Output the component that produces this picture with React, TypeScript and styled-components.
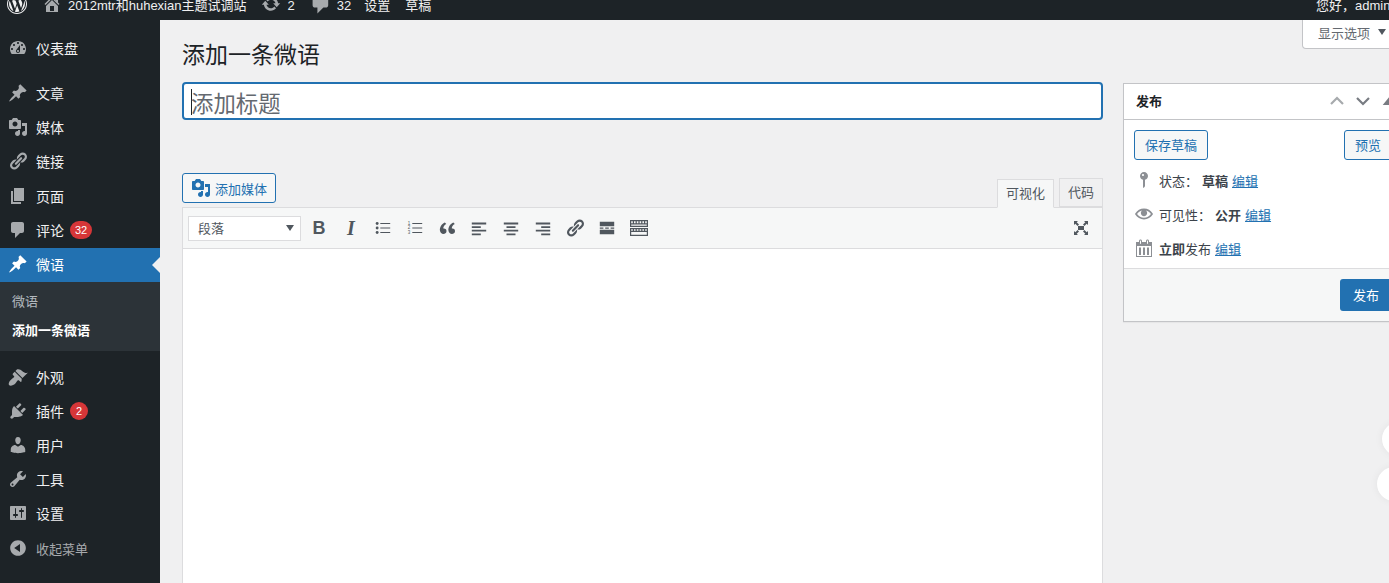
import React from "react";
import styled, { createGlobalStyle } from "styled-components";

const Global = createGlobalStyle`
  html, body { margin: 0; padding: 0; height: 100%; overflow: hidden; background: #f0f0f1; }
  * { box-sizing: border-box; }
  body { font-family: "Liberation Sans", "Noto Sans CJK SC", sans-serif; font-size: 13px; color: #3c434a; }
`;

const P: Record<string, string> = {
  wp: "M20 10c0-5.52-4.48-10-10-10S0 4.48 0 10s4.48 10 10 10 10-4.48 10-10zM10 1.01c4.96 0 8.99 4.03 8.99 8.99s-4.03 8.99-8.99 8.99S1.01 14.96 1.01 10 5.04 1.01 10 1.01zM8.01 14.82L4.96 6.61c.49-.03 1.05-.08 1.05-.08.43-.05.38-1.01-.06-.99 0 0-1.29.1-2.13.1-.15 0-.33 0-.52-.01 1.44-2.17 3.9-3.6 6.7-3.6 2.09 0 3.99.79 5.41 2.09-.6-.08-1.45.35-1.45 1.42 0 .66.38 1.22.79 1.88.31.54.5 1.22.5 2.21 0 1.34-1.27 4.48-1.27 4.48l-2.71-7.5c.48-.03.75-.16.75-.16.43-.05.38-1.1-.05-1.08 0 0-1.3.11-2.14.11-.78 0-2.11-.11-2.11-.11-.43-.02-.48 1.06-.05 1.08l.84.08 1.12 3.04zm6.02 2.15L16.64 10s.67-1.69.39-3.81c.63 1.14.94 2.42.94 3.81 0 2.96-1.56 5.58-3.94 6.97zM2.68 6.77L6.5 17.25c-2.67-1.3-4.47-4.08-4.47-7.25 0-1.16.2-2.23.65-3.23zm7.45 4.53l2.29 6.25c-.76.3-1.57.45-2.42.45-.72 0-1.41-.11-2.06-.31z",
  home: "M16 8.5l1.53 1.53-1.06 1.06L10 4.62l-6.47 6.47-1.06-1.06L10 2.5l4 4v-2h2v4zm-6-2.46l6 5.99V18H4v-5.97zM12 17v-5H8v5h4z",
  update: "M10.2 3.28c3.53 0 6.43 2.61 6.92 6h2.08l-3.5 4-3.5-4h2.32c-.45-1.97-2.21-3.45-4.32-3.45-1.45 0-2.73.71-3.54 1.78L4.95 5.66C6.23 4.2 8.11 3.28 10.2 3.28zm-.4 13.44c-3.52 0-6.43-2.61-6.92-6H.8l3.5-4c1.17 1.33 2.33 2.67 3.5 4H5.48c.45 1.97 2.21 3.45 4.32 3.45 1.45 0 2.73-.71 3.54-1.78l1.71 1.95c-1.28 1.46-3.15 2.38-5.25 2.38z",
  comment: "M5 2h9c1.1 0 2 .9 2 2v7c0 1.1-.9 2-2 2h-2l-5 5v-5H5c-1.1 0-2-.9-2-2V4c0-1.1.9-2 2-2z",
  dashboard: "M3.76 16h12.48c1.1-1.37 1.76-3.11 1.76-5 0-4.42-3.58-8-8-8s-8 3.58-8 8c0 1.89.66 3.63 1.76 5zM10 4c.55 0 1 .45 1 1s-.45 1-1 1-1-.45-1-1 .45-1 1-1zM6 6c.55 0 1 .45 1 1s-.45 1-1 1-1-.45-1-1 .45-1 1-1zm8 0c.55 0 1 .45 1 1s-.45 1-1 1-1-.45-1-1 .45-1 1-1zm-5.37 5.55L12 7v6c0 1.1-.9 2-2 2s-2-.9-2-2c0-.57.24-1.08.63-1.45zM4 10c.55 0 1 .45 1 1s-.45 1-1 1-1-.45-1-1 .45-1 1-1zm12 0c.55 0 1 .45 1 1s-.45 1-1 1-1-.45-1-1 .45-1 1-1zm-5 3c0-.55-.45-1-1-1s-1 .45-1 1 .45 1 1 1 1-.45 1-1z",
  post: "M10.44 3.02l1.82-1.82 6.36 6.35-1.83 1.82c-1.05-.68-2.48-.57-3.41.36l-.75.75c-.92.93-1.04 2.35-.35 3.41l-1.83 1.82-2.41-2.41-2.8 2.79c-.42.42-3.38 2.71-3.8 2.29s1.86-3.39 2.28-3.81l2.79-2.79L4.1 9.36l1.83-1.82c1.05.69 2.48.57 3.4-.36l.75-.75c.93-.92 1.05-2.35.36-3.41z",
  media: "M13 11V4c0-.55-.45-1-1-1h-1.67L9 1H5L3.67 3H2c-.55 0-1 .45-1 1v7c0 .55.45 1 1 1h10c.55 0 1-.45 1-1zM7 4.5c1.38 0 2.5 1.12 2.5 2.5S8.38 9.5 7 9.5 4.5 8.38 4.5 7 5.62 4.5 7 4.5zM14 6h5v10.5c0 1.38-1.12 2.5-2.5 2.5S14 17.88 14 16.5s1.12-2.5 2.5-2.5c.17 0 .34.02.5.05V9h-3V6zm-4 8.05V13h2v3.5c0 1.38-1.12 2.5-2.5 2.5S7 17.88 7 16.5 8.12 14 9.5 14c.17 0 .34.02.5.05z",
  links: "M17.74 2.76c1.68 1.69 1.68 4.41 0 6.1l-1.53 1.52c-1.12 1.12-2.7 1.47-4.14 1.09l2.62-2.61.76-.77.76-.76c.84-.84.84-2.2 0-3.04-.84-.85-2.2-.85-3.04 0l-.77.76-3.38 3.38c-.37-1.44-.02-3.02 1.1-4.14l1.52-1.53c1.69-1.68 4.42-1.68 6.1 0zM8.59 13.43l5.34-5.34c.42-.42.42-1.1 0-1.52-.44-.43-1.13-.39-1.53 0l-5.33 5.34c-.42.42-.42 1.1 0 1.52.44.43 1.13.39 1.52 0zm-.76 2.29l4.14-4.15c.38 1.44.03 3.02-1.09 4.14l-1.52 1.53c-1.69 1.68-4.41 1.68-6.1 0-1.68-1.68-1.68-4.42 0-6.1l1.53-1.52c1.12-1.12 2.7-1.47 4.14-1.1l-4.14 4.15c-.85.84-.85 2.2 0 3.05.84.84 2.2.84 3.04 0z",
  page: "M6 15V2h10v13H6zm-1 1h8v2H3V5h2v11z",
  appearance: "M14.48 11.06L7.41 3.99l1.5-1.5c.5-.56 2.3-.47 3.51.32 1.21.8 1.43 1.28 2.91 2.1 1.18.64 2.45 1.26 4.45.85zm-.71.71L6.7 4.7 4.93 6.47c-.39.39-.39 1.02 0 1.41l1.06 1.06c.39.39.39 1.03 0 1.42-.6.6-1.43 1.11-2.21 1.69-.35.26-.7.53-1.01.84C1.43 13.71 0 17 1.25 18.25c1.25 1.25 4.5-.15 5.84-1.48.31-.31.58-.66.84-1.01.58-.78 1.09-1.61 1.69-2.21.39-.39 1.03-.39 1.42 0l1.06 1.06c.39.39 1.02.39 1.41 0z",
  plugins: "M13.11 4.36L9.87 7.6 8 5.73l3.24-3.24c.35-.34 1.05-.2 1.56.32.52.51.66 1.21.31 1.55zm-8 1.77l.91-1.12 9.01 9.01-1.19.84c-.71.71-2.63 1.16-3.82 1.16H6.14L4.9 17.26c-.59.59-1.54.59-2.12 0-.59-.58-.59-1.53 0-2.12l1.24-1.24v-3.88c0-1.13.4-3.19 1.09-3.89zm7.26 3.97l3.24-3.24c.34-.35 1.04-.21 1.55.31.52.51.66 1.21.31 1.55l-3.24 3.25z",
  users: "M10 9.25c-2.27 0-2.73-3.44-2.73-3.44C7 4.02 7.82 2 9.97 2c2.16 0 2.98 2.02 2.71 3.81 0 0-.41 3.44-2.68 3.44zm0 2.57L12.72 10c2.39 0 4.52 2.33 4.52 4.53v2.49s-3.65 1.13-7.24 1.13c-3.65 0-7.24-1.13-7.24-1.13v-2.49c0-2.25 1.94-4.48 4.47-4.48z",
  tools: "M16.68 9.77c-1.34 1.34-3.3 1.67-4.95.99l-5.41 6.52c-.99.99-2.59.99-3.58 0s-.99-2.59 0-3.57l6.52-5.42c-.68-1.65-.35-3.61.99-4.95 1.28-1.28 3.12-1.62 4.72-1.06l-2.89 2.89 2.82 2.82 2.86-2.87c.53 1.58.18 3.39-1.08 4.65zM3.81 16.21c.4.39 1.04.39 1.43 0 .4-.4.4-1.04 0-1.43-.39-.4-1.03-.4-1.43 0-.39.39-.39 1.03 0 1.43z",
  settings: "M18 16V4c0-.55-.45-1-1-1H3c-.55 0-1 .45-1 1v12c0 .55.45 1 1 1h14c.55 0 1-.45 1-1zM8 11h1c.55 0 1 .45 1 1s-.45 1-1 1H8v1.5c0 .28-.22.5-.5.5s-.5-.22-.5-.5V13H6c-.55 0-1-.45-1-1s.45-1 1-1h1V5.5c0-.28.22-.5.5-.5s.5.22.5.5V11zm5-2h-1c-.55 0-1-.45-1-1s.45-1 1-1h1V5.5c0-.28.22-.5.5-.5s.5.22.5.5V7h1c.55 0 1 .45 1 1s-.45 1-1 1h-1v5.5c0 .28-.22.5-.5.5s-.5-.22-.5-.5V9z",
  collapse: "M10 2.16c4.33 0 7.84 3.51 7.84 7.84s-3.51 7.84-7.84 7.84S2.16 14.33 2.16 10 5.71 2.16 10 2.16zm2 11.72V6.12L6.18 9.97z",
  pin: "M14 6c0 1.86-1.28 3.41-3 3.86V16c0 1-2 2-2 2V9.86c-1.72-.45-3-2-3-3.86 0-2.21 1.79-4 4-4s4 1.79 4 4zM8 5c0 .55.45 1 1 1s1-.45 1-1-.45-1-1-1-1 .45-1 1z",
  eye: "M19.7 9.4C17.7 6 14 3.9 10 3.9S2.3 6 .3 9.4L0 10l.3.6c2 3.4 5.7 5.5 9.7 5.5s7.7-2.1 9.7-5.5l.3-.6-.3-.6zM10 14.1c-3.1 0-6-1.6-7.7-4.1C3.6 8 5.7 6.6 8 6.1c-.9.6-1.5 1.7-1.5 2.9 0 1.9 1.6 3.5 3.5 3.5s3.5-1.6 3.5-3.5c0-1.2-.6-2.3-1.5-2.9 2.3.5 4.4 1.9 5.7 3.9-1.7 2.5-4.6 4.1-7.7 4.1z",
  calendar: "M15 4h3v15H2V4h3V3c0-.41.15-.76.44-1.06.29-.29.65-.44 1.06-.44s.77.15 1.06.44c.29.3.44.65.44 1.06v1h4V3c0-.41.15-.76.44-1.06.29-.29.65-.44 1.06-.44s.77.15 1.06.44c.29.3.44.65.44 1.06v1zM6 3v2.5c0 .14.05.26.15.36.09.09.21.14.35.14s.26-.05.35-.14c.1-.1.15-.22.15-.36V3c0-.14-.05-.26-.15-.35-.09-.1-.21-.15-.35-.15s-.26.05-.35.15c-.1.09-.15.21-.15.35zm7 0v2.5c0 .14.05.26.14.36.1.09.22.14.36.14s.26-.05.36-.14c.09-.1.14-.22.14-.36V3c0-.14-.05-.26-.14-.35-.1-.1-.22-.15-.36-.15s-.26.05-.36.15c-.09.09-.14.21-.14.35zm4 15V8H3v10h14zM5 9.5h2V17H5zM9 9.5h2V17H9zM13 9.5h2V17h-2z",
  quote: "M9.49 13.22c0-.74-.2-1.38-.61-1.9-.62-.78-1.83-.88-2.53-.72-.29-1.65 1.11-3.75 2.92-4.65L7.88 4.5c-2.73 1.3-5.42 4.28-4.96 8.05C3.21 14.92 4.8 16 6.3 16c.75 0 1.8-.25 2.5-.9.45-.43.69-1.12.69-1.88zm8.5 0c0-.74-.2-1.38-.61-1.9-.62-.78-1.82-.88-2.53-.72-.29-1.65 1.11-3.75 2.92-4.65L16.38 4.5c-2.73 1.3-5.42 4.28-4.96 8.05.29 2.37 1.88 3.45 3.38 3.45.75 0 1.8-.25 2.5-.9.45-.43.69-1.12.69-1.88z",
  alignLeft: "M2 4h16v2H2zM2 8h10v2H2zM2 12h16v2H2zM2 16h10v2H2z",
  alignCenter: "M2 4h16v2H2zM5 8h10v2H5zM2 12h16v2H2zM5 16h10v2H5z",
  alignRight: "M2 4h16v2H2zM8 8h10v2H8zM2 12h16v2H2zM8 16h10v2H8z",
  more: "M2 3h16v5H2zM2 9.5h4v1.2H2zM8 9.5h4v1.2H8zM14 9.5h4v1.2h-4zM2 12h16v5H2z",
  kitchen: "M1 2h18v7H1zM1 10h18v8H1zM2.2 3.2v2h1.6v-2zM5 3.2v2h1.6v-2zM7.8 3.2v2h1.6v-2zM10.6 3.2v2h1.6v-2zM13.4 3.2v2H15v-2zM16.2 3.2v2h1.6v-2zM2.2 6.4v1.4h15.6V6.4zM2.2 11.2v1.6h1.6v-1.6zM5 11.2v1.6h1.6v-1.6zM7.8 11.2v1.6h1.6v-1.6zM10.6 11.2v1.6h1.6v-1.6zM13.4 11.2v1.6H15v-1.6zM16.2 11.2v1.6h1.6v-1.6zM2.2 14v2.8h15.6V14z",
  fullscreen: "M7 8h6v4H7zM3 3h4L5.7 4.3 8 6.6 6.6 8 4.3 5.7 3 7zM17 3v4l-1.3-1.3L13.4 8 12 6.6l2.3-2.3L13 3zM3 17v-4l1.3 1.3L6.6 12 8 13.4l-2.3 2.3L7 17zM17 17h-4l1.3-1.3-2.3-2.3 1.4-1.4 2.3 2.3L17 13z",
};

const Glyph = styled.svg<{ $size?: number; $color?: string }>`
  width: ${(p) => p.$size ?? 20}px;
  height: ${(p) => p.$size ?? 20}px;
  flex: none;
  fill: ${(p) => p.$color ?? "currentColor"};
`;
const Icon = ({ name, size, color }: { name: string; size?: number; color?: string }) => (
  <Glyph viewBox="0 0 20 20" $size={size} $color={color} fillRule="evenodd">
    <path d={P[name]} fillRule="evenodd" />
  </Glyph>
);

const Page = styled.div`
  width: 1389px;
  height: 583px;
  overflow: hidden;
  display: flex;
  flex-direction: column;
  position: relative;
  background: #f0f0f1;
`;

const AdminBar = styled.header`
  flex: none;
  height: 32px;
  margin-top: -12px;
  padding: 0 0 0 7px;
  display: flex;
  align-items: center;
  background: #1d2327;
  color: #f0f0f1;
  font-size: 13px;
  line-height: 28px;
  white-space: nowrap;
  position: relative;
  z-index: 2;
`;
const BarItem = styled.div<{ $gap?: number; $ml?: number; }>`
  display: flex;
  align-items: center;
  gap: ${(p) => p.$gap ?? 6}px;
  margin-left: ${(p) => p.$ml ?? 0}px;
  color: #f0f0f1;
  svg { color: #a7aaad; }
`;
const BarText = styled.span`
  padding-top: 3px;
`;
const Greeting = styled.div`
  margin-left: auto;
  width: 73px;
  overflow: hidden;
  padding-top: 3px;
`;

const Body = styled.div`
  flex: 1;
  display: flex;
  min-height: 0;
`;

const Sidebar = styled.nav`
  flex: none;
  width: 160px;
  background: #1d2327;
  padding-top: 12px;
  display: flex;
  flex-direction: column;
`;
const MenuGroup = styled.div<{ $row: number; $mb?: number }>`
  display: grid;
  grid-auto-rows: ${(p) => p.$row}px;
  margin-bottom: ${(p) => p.$mb ?? 0}px;
`;
const MenuItem = styled.div<{ $active?: boolean }>`
  position: relative;
  display: flex;
  align-items: center;
  padding: 0 0 2px 8px;
  gap: 8px;
  font-size: 14px;
  color: ${(p) => (p.$active ? "#fff" : "#f0f0f1")};
  background: ${(p) => (p.$active ? "#2271b1" : "transparent")};
  svg { color: ${(p) => (p.$active ? "#fff" : "#a7aaad")}; }
`;
const Arrow = styled.span`
  position: absolute;
  right: 0;
  top: 50%;
  margin-top: -8px;
  border: 8px solid transparent;
  border-right-color: #f0f0f1;
  border-left-width: 0;
`;
const Badge = styled.span`
  min-width: 18px;
  height: 18px;
  padding: 0 5px;
  margin-left: -2px;
  border-radius: 9px;
  background: #d63638;
  color: #fff;
  font-size: 11px;
  line-height: 18px;
  text-align: center;
`;
const SubMenu = styled.div`
  background: #2c3338;
  height: 69px;
  padding: 4px 12px 0;
  margin-bottom: 10px;
`;
const SubLink = styled.div<{ $current?: boolean }>`
  height: 29px;
  display: flex;
  align-items: center;
  font-size: 13px;
  color: ${(p) => (p.$current ? "#fff" : "rgba(240,246,252,.7)")};
  font-weight: ${(p) => (p.$current ? 700 : 400)};
`;
const CollapseRow = styled.div`
  display: flex;
  align-items: center;
  gap: 8px;
  padding-left: 8px;
  height: 34px;
  font-size: 13px;
  color: #a7aaad;
  svg { color: #a7aaad; }
`;

const Main = styled.main`
  flex: 1;
  min-width: 0;
  padding: 21px 0 0 22px;
  display: flex;
  flex-direction: column;
`;
const MetaRow = styled.div`
  height: 0;
  display: flex;
  justify-content: flex-end;
  margin-top: -21px;
  margin-bottom: 21px;
`;
const MetaTab = styled.div`
  width: 102px;
  height: 29px;
  margin-right: -15px;
  padding: 0 0 4px 15px;
  background: #fff;
  border: 1px solid #c3c4c7;
  border-top: none;
  border-radius: 0 0 4px 4px;
  display: flex;
  align-items: center;
  gap: 5px;
  font-size: 13px;
  color: #646970;
  flex: none;
`;
const Caret = styled.span`
  border: 4px solid transparent;
  border-top: 6px solid #50575e;
  border-bottom: 0;
  margin-left: 3px;
`;
const Title = styled.h1`
  margin: 0 0 12px;
  font-size: 23px;
  font-weight: 400;
  line-height: 29px;
  color: #1d2327;
`;
const Columns = styled.div`
  display: flex;
  gap: 20px;
  align-items: flex-start;
  flex: 1;
`;
const EditorCol = styled.div`
  flex: none;
  width: 921px;
`;
const TitleBox = styled.div`
  height: 38px;
  background: #fff;
  border: 2px solid #2271b1;
  border-radius: 4px;
  display: flex;
  align-items: center;
  padding: 2px 0 0 7px;
  font-size: 22.4px;
  color: #646970;
`;
const TextCaret = styled.span`
  width: 1px;
  height: 26px;
  background: #1d2327;
  margin-right: -1px;
`;
const EditorTop = styled.div`
  margin-top: 54px;
  display: flex;
  justify-content: space-between;
  align-items: flex-end;
  height: 33px;
`;
const MediaButton = styled.div`
  width: 94px;
  height: 30px;
  margin-bottom: 4px;
  border: 1px solid #2271b1;
  border-radius: 3px;
  background: #f6f7f7;
  color: #2271b1;
  display: flex;
  align-items: center;
  padding: 0 0 0 8px;
  gap: 4px;
  font-size: 13px;
`;
const Tabs = styled.div`
  display: flex;
  gap: 5px;
  align-items: flex-end;
`;
const Tab = styled.div<{ $on?: boolean }>`
  height: 29px;
  padding: 0 8px 2px;
  border: 1px solid #dcdcde;
  background: ${(p) => (p.$on ? "#f6f7f7" : "#f0f0f1")};
  border-bottom: ${(p) => (p.$on ? "1px solid #f6f7f7" : "1px solid #dcdcde")};
  margin-bottom: ${(p) => (p.$on ? -1 : 0)}px;
  color: #50575e;
  font-size: 13px;
  display: flex;
  align-items: center;
  position: relative;
`;
const Editor = styled.div`
  border: 1px solid #dcdcde;
  background: #fff;
  height: 400px;
`;
const Toolbar = styled.div`
  height: 41px;
  background: #f6f7f7;
  border-bottom: 1px solid #dcdcde;
  display: flex;
  align-items: center;
  padding: 0 11px 0 5px;
  color: #50575e;
`;
const FormatSelect = styled.div`
  width: 113px;
  height: 25px;
  margin-right: 2px;
  background: #fff;
  border: 1px solid #dcdcde;
  display: flex;
  align-items: center;
  justify-content: space-between;
  padding: 0 6px 2px 9px;
  font-size: 13px;
  color: #50575e;
`;
const SelectArrow = styled.span`
  border: 4px solid transparent;
  border-top: 6px solid #50575e;
  border-bottom: 0;
  margin-top: 2px;
`;
const ToolBtn = styled.div`
  width: 32px;
  height: 32px;
  display: flex;
  align-items: center;
  justify-content: center;
  flex: none;
`;
const ToolLetter = styled.span<{ $italic?: boolean }>`
  font-family: ${(p) => (p.$italic ? '"Liberation Serif"' : '"Liberation Sans"')}, serif;
  font-weight: 700;
  font-style: ${(p) => (p.$italic ? "italic" : "normal")};
  font-size: ${(p) => (p.$italic ? 20 : 18)}px;
  color: #50575e;
`;
const Spacer = styled.div`
  flex: 1;
`;
const ListGlyph = styled.svg`
  width: 18px;
  height: 18px;
  fill: #50575e;
`;
const ListNumber = styled.text`
  font-family: "Liberation Sans", sans-serif;
  font-size: 5px;
  fill: #50575e;
`;

const Side = styled.aside`
  flex: none;
  width: 280px;
  padding-top: 1px;
`;
const Box = styled.section`
  background: #fff;
  border: 1px solid #c3c4c7;
  box-shadow: 0 1px 1px rgba(0, 0, 0, 0.04);
`;
const BoxHead = styled.div`
  height: 36px;
  border-bottom: 1px solid #c3c4c7;
  display: flex;
  align-items: center;
  padding: 0 0 2px 12px;
  font-size: 13px;
  font-weight: 700;
  color: #1d2327;
`;
const HeadControls = styled.div`
  margin-left: auto;
  width: 74px;
  margin-right: -2px;
  display: flex;
  gap: 12px;
  flex: none;
`;
const Chevron = styled.svg<{ $light?: boolean }>`
  width: 14px;
  height: 10px;
  flex: none;
  fill: none;
  stroke: ${(p) => (p.$light ? "#a7aaad" : "#787c82")};
  stroke-width: 2.2;
`;
const BoxInner = styled.div`
  padding: 10px 10px 0 10px;
`;
const ActionRow = styled.div`
  display: flex;
  justify-content: space-between;
  margin-bottom: 3px;
`;
const SecondaryBtn = styled.div`
  height: 30px;
  padding: 0 10px 1px;
  border: 1px solid #2271b1;
  border-radius: 3px;
  background: #f6f7f7;
  color: #2271b1;
  font-size: 13px;
  display: flex;
  align-items: center;
`;
const InfoRow = styled.div`
  height: 34px;
  display: flex;
  align-items: center;
  gap: 6px;
  font-size: 13px;
  color: #3c434a;
  svg { color: #8c8f94; }
`;
const InfoIcon = styled.span`
  width: 19px;
  display: flex;
  justify-content: center;
  flex: none;
`;
const InfoText = styled.span`
  display: flex;
  gap: 4px;
`;
const Strong = styled.b`
  font-weight: 700;
`;
const EditLink = styled.a`
  color: #2271b1;
  text-decoration: underline;
`;
const BoxFoot = styled.div`
  margin-top: 3px;
  height: 53px;
  background: #f6f7f7;
  border-top: 1px solid #dcdcde;
  display: flex;
  justify-content: flex-end;
  align-items: center;
  padding-right: 10px;
`;
const PrimaryBtn = styled.div`
  width: 52px;
  height: 32px;
  padding-bottom: 2px;
  background: #2271b1;
  border-radius: 3px;
  color: #fff;
  font-size: 13px;
  display: flex;
  align-items: center;
  justify-content: center;
`;
const Floating = styled.div<{ $x: number; $y: number }>`
  position: absolute;
  left: ${(p) => p.$x}px;
  top: ${(p) => p.$y}px;
  width: 34px;
  height: 34px;
  border-radius: 50%;
  background: #fff;
  box-shadow: 0 0 8px rgba(0, 0, 0, 0.06);
`;

const Edit = () => <EditLink>编辑</EditLink>;

export default function App() {
  return (
    <Page>
      <Global />
      <AdminBar>
        <Icon name="wp" />
        <BarItem $ml={15}><Icon name="home" /><BarText>2012mtr和huhexian主题试调站</BarText></BarItem>
        <BarItem $ml={15}><Icon name="update" /><BarText>2</BarText></BarItem>
        <BarItem $ml={14} $gap={4}><Icon name="comment" size={24} /><BarText>32</BarText></BarItem>
        <BarItem $ml={13}><BarText>设置</BarText></BarItem>
        <BarItem $ml={15}><BarText>草稿</BarText></BarItem>
        <Greeting>您好，admin</Greeting>
      </AdminBar>
      <Body>
        <Sidebar>
          <MenuGroup $row={34} $mb={11}>
            <MenuItem><Icon name="dashboard" />仪表盘</MenuItem>
          </MenuGroup>
          <MenuGroup $row={34.2}>
            <MenuItem><Icon name="post" />文章</MenuItem>
            <MenuItem><Icon name="media" />媒体</MenuItem>
            <MenuItem><Icon name="links" />链接</MenuItem>
            <MenuItem><Icon name="page" />页面</MenuItem>
            <MenuItem><Icon name="comment" />评论<Badge>32</Badge></MenuItem>
            <MenuItem $active><Icon name="post" />微语<Arrow /></MenuItem>
          </MenuGroup>
          <SubMenu>
            <SubLink>微语</SubLink>
            <SubLink $current>添加一条微语</SubLink>
          </SubMenu>
          <MenuGroup $row={34}>
            <MenuItem><Icon name="appearance" />外观</MenuItem>
            <MenuItem><Icon name="plugins" />插件<Badge>2</Badge></MenuItem>
            <MenuItem><Icon name="users" />用户</MenuItem>
            <MenuItem><Icon name="tools" />工具</MenuItem>
            <MenuItem><Icon name="settings" />设置</MenuItem>
          </MenuGroup>
          <CollapseRow><Icon name="collapse" />收起菜单</CollapseRow>
        </Sidebar>
        <Main>
          <MetaRow>
            <MetaTab>显示选项<Caret /></MetaTab>
          </MetaRow>
          <Title>添加一条微语</Title>
          <Columns>
            <EditorCol>
              <TitleBox><TextCaret />添加标题</TitleBox>
              <EditorTop>
                <MediaButton><Icon name="media" />添加媒体</MediaButton>
                <Tabs>
                  <Tab $on>可视化</Tab>
                  <Tab>代码</Tab>
                </Tabs>
              </EditorTop>
              <Editor>
                <Toolbar>
                  <FormatSelect>段落<SelectArrow /></FormatSelect>
                  <ToolBtn><ToolLetter>B</ToolLetter></ToolBtn>
                  <ToolBtn><ToolLetter $italic>I</ToolLetter></ToolBtn>
                  <ToolBtn>
                    <ListGlyph viewBox="0 0 20 20">
                      <circle cx="3.5" cy="5" r="1.6" /><circle cx="3.5" cy="10" r="1.6" /><circle cx="3.5" cy="15" r="1.6" />
                      <path d="M7 4.5h11v1H7zM7 9.5h11v1H7zM7 14.5h11v1H7z" />
                    </ListGlyph>
                  </ToolBtn>
                  <ToolBtn>
                    <ListGlyph viewBox="0 0 20 20">
                      <ListNumber x="2" y="6.5">1</ListNumber>
                      <ListNumber x="2" y="11.5">2</ListNumber>
                      <ListNumber x="2" y="16.5">3</ListNumber>
                      <path d="M7 4.5h11v1H7zM7 9.5h11v1H7zM7 14.5h11v1H7z" />
                    </ListGlyph>
                  </ToolBtn>
                  <ToolBtn><Icon name="quote" /></ToolBtn>
                  <ToolBtn><Icon name="alignLeft" size={18} /></ToolBtn>
                  <ToolBtn><Icon name="alignCenter" size={18} /></ToolBtn>
                  <ToolBtn><Icon name="alignRight" size={18} /></ToolBtn>
                  <ToolBtn><Icon name="links" /></ToolBtn>
                  <ToolBtn><Icon name="more" size={18} /></ToolBtn>
                  <ToolBtn><Icon name="kitchen" /></ToolBtn>
                  <Spacer />
                  <Icon name="fullscreen" />
                </Toolbar>
              </Editor>
            </EditorCol>
            <Side>
              <Box>
                <BoxHead>
                  发布
                  <HeadControls>
                    <Chevron viewBox="0 0 14 10" $light><path d="M1 8l6-6 6 6" /></Chevron>
                    <Chevron viewBox="0 0 14 10"><path d="M1 2l6 6 6-6" /></Chevron>
                    <Chevron viewBox="0 0 14 10"><path d="M3 8l4-5 4 5z" fill="#787c82" /></Chevron>
                  </HeadControls>
                </BoxHead>
                <BoxInner>
                  <ActionRow>
                    <SecondaryBtn>保存草稿</SecondaryBtn>
                    <SecondaryBtn>预览</SecondaryBtn>
                  </ActionRow>
                  <InfoRow>
                    <InfoIcon><Icon name="pin" /></InfoIcon>
                    <InfoText>状态： <Strong>草稿</Strong> <Edit /></InfoText>
                  </InfoRow>
                  <InfoRow>
                    <InfoIcon><Icon name="eye" size={18} /></InfoIcon>
                    <InfoText>可见性： <Strong>公开</Strong> <Edit /></InfoText>
                  </InfoRow>
                  <InfoRow>
                    <InfoIcon><Icon name="calendar" /></InfoIcon>
                    <InfoText><span><Strong>立即</Strong>发布</span> <Edit /></InfoText>
                  </InfoRow>
                </BoxInner>
                <BoxFoot><PrimaryBtn>发布</PrimaryBtn></BoxFoot>
              </Box>
            </Side>
          </Columns>
        </Main>
      </Body>
      <Floating $x={1382} $y={422} />
      <Floating $x={1377} $y={467} />
    </Page>
  );
}
